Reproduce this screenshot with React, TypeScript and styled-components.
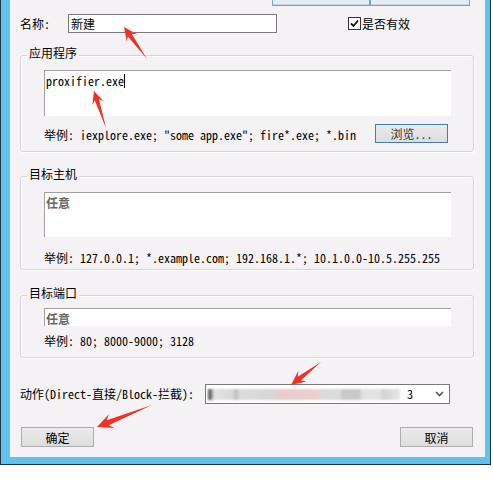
import React from "react";
import styled, { createGlobalStyle } from "styled-components";

const GlobalStyle = createGlobalStyle`
  html, body { margin: 0; padding: 0; background: #ffffff; }
  body {
    font-family: "Noto Sans Mono CJK SC", "Noto Sans CJK SC", "Liberation Mono", monospace;
    font-size: 12px;
    color: #000;
  }
  * { box-sizing: border-box; }
`;

const Frame = styled.div`
  position: relative;
  width: 491px;
  height: 465px;
  background: #5ec4ec;
  border: 1px solid #1f3347;
  border-top: none;
  padding: 0 5px 7px 9px;
`;

const Panel = styled.div`
  width: 475px;
  height: 457px;
  background: #f4f2f5;
  padding: 0 11px 0 10px;
  display: flex;
  flex-direction: column;
`;

const TopBar = styled.div`
  display: flex;
  justify-content: flex-end;
  padding-right: 4px;
  height: 6px;
`;

const Tab = styled.div<{ $w: number }>`
  width: ${(p) => p.$w}px;
  height: 6px;
  background: #e4edf2;
  border: 1px solid #7fa0c6;
  border-top: none;
  box-shadow: inset 0 -1px 0 #c4d6ea;
`;

const NameRow = styled.div`
  display: flex;
  align-items: center;
  margin-top: 8px;
  height: 19px;
`;

const Label = styled.span<{ $w?: number }>`
  width: ${(p) => (p.$w ? `${p.$w}px` : "auto")};
  flex-shrink: 0;
  line-height: 14px;
  white-space: pre;
`;

const TextBox = styled.div`
  width: 209px;
  height: 19px;
  background: #fff;
  border: 1px solid #7a7a7a;
  padding-left: 2px;
  line-height: 17px;
`;

const Check = styled.label`
  display: flex;
  align-items: center;
  margin-left: 71px;
  line-height: 14px;
`;

const CheckBox = styled.span`
  width: 13px;
  height: 13px;
  border: 1px solid #333;
  background: #fff;
  display: flex;
  align-items: center;
  justify-content: center;
  margin-right: 1px;
`;

const Group = styled.div<{ $mt: number; $pt: number; $pb: number }>`
  position: relative;
  margin-top: ${(p) => p.$mt}px;
  border: 1px solid #d6d4d7;
  border-radius: 3px;
  box-shadow: inset 1px 1px 0 #ffffff, 1px 1px 0 #ffffff;
  padding: ${(p) => p.$pt}px 22px ${(p) => p.$pb}px 23px;
`;

const Legend = styled.span`
  position: absolute;
  top: -10px;
  left: 6px;
  padding: 0 2px;
  background: #f4f2f5;
  line-height: 14px;
`;

const Area = styled.div<{ $h: number }>`
  height: ${(p) => p.$h}px;
  background: #fff;
  border-top: 1px solid #a0a0a0;
  border-left: 1px solid #a0a0a0;
  padding: 3px 1px;
  line-height: 14px;
  white-space: pre;
`;

const Placeholder = styled.span`
  color: #666666;
  font-weight: 700;
`;

const Caret = styled.span`
  display: inline-block;
  width: 1px;
  height: 14px;
  background: #000;
  vertical-align: top;
`;

const ExampleRow = styled.div<{ $mt: number }>`
  display: flex;
  justify-content: space-between;
  align-items: flex-end;
  margin-top: ${(p) => p.$mt}px;
`;

const Example = styled.span`
  line-height: 16px;
  white-space: pre;
`;

const Button = styled.div<{ $focus?: boolean }>`
  width: 73px;
  height: ${(p) => (p.$focus ? 19 : 20)}px;
  border: 1px solid ${(p) => (p.$focus ? "#3c7fb1" : "#adadad")};
  background: linear-gradient(#ebebeb, #dddddd);
  display: flex;
  align-items: center;
  justify-content: center;
  color: ${(p) => (p.$focus ? "#333" : "#000")};
  margin-right: ${(p) => (p.$focus ? 3 : 0)}px;
`;

const ActionRow = styled.div`
  display: flex;
  align-items: center;
  margin-top: 26px;
  height: 20px;
`;

const Select = styled.div`
  width: 245px;
  height: 20px;
  background: #fff;
  border: 1px solid #7a7a7a;
  display: flex;
  align-items: center;
  padding: 0 5px 0 2px;
`;

const Masked = styled.div`
  width: 192px;
  height: 11px;
  filter: blur(1.2px);
  background: linear-gradient(
    90deg,
    #555 0px,
    #777 3px,
    #e2e2e2 6px,
    #d8d8d8 25px,
    #bdbdbd 28px,
    #dcdcdc 32px,
    #d6d6d6 65px,
    #e9cccc 72px,
    #eccfcf 110px,
    #dadada 114px,
    #dadada 132px,
    #c9c9c9 134px,
    #c9c9c9 152px,
    #e2e2e2 154px,
    #e2e2e2 172px,
    #d2d2d2 174px,
    #e6e6e6 192px
  );
`;

const SelectValue = styled.span`
  margin-left: 7px;
  flex: 1;
  line-height: 14px;
`;

const ButtonRow = styled.div`
  display: flex;
  justify-content: space-between;
  margin: 23px 1px 0 1px;
`;

const Overlay = styled.svg`
  position: absolute;
  left: 0;
  top: 0;
  pointer-events: none;
`;

function arrowPoints(tx: number, ty: number, hx: number, hy: number, s: number) {
  const dx = hx - tx;
  const dy = hy - ty;
  const len = Math.hypot(dx, dy);
  const ux = dx / len;
  const uy = dy / len;
  const px = -uy;
  const py = ux;
  const headLen = 15 * s;
  const headW = 7 * s;
  const neckW = 2.6 * s;
  const bx = hx - ux * headLen;
  const by = hy - uy * headLen;
  const nx = bx + ux * 4 * s;
  const ny = by + uy * 4 * s;
  const pts = [
    [tx, ty],
    [nx + px * neckW, ny + py * neckW],
    [bx + px * headW, by + py * headW],
    [hx, hy],
    [bx - px * headW, by - py * headW],
    [nx - px * neckW, ny - py * neckW],
  ];
  return pts.map((p) => `${p[0].toFixed(1)},${p[1].toFixed(1)}`).join(" ");
}

const arrows = [
  { t: [147, 59], h: [124, 27], s: 0.9 },
  { t: [106, 128], h: [94, 91], s: 0.85 },
  { t: [321, 362], h: [291, 385], s: 0.95 },
  { t: [152, 405], h: [97, 427], s: 1.05 },
];

export default function App() {
  return (
    <>
      <GlobalStyle />
      <Frame>
        <Panel>
          <TopBar>
            <Tab $w={98} />
            <Tab $w={100} />
          </TopBar>

          <NameRow>
            <Label $w={48}>名称:</Label>
            <TextBox>新建</TextBox>
            <Check>
              <CheckBox>
                <svg width="9" height="9" viewBox="0 0 9 9">
                  <path d="M1 4.5 L3.5 7 L8 1.5" fill="none" stroke="#111" strokeWidth="1.8" />
                </svg>
              </CheckBox>
              是否有效
            </Check>
          </NameRow>

          <Group $mt={22} $pt={14} $pb={8}>
            <Legend>应用程序</Legend>
            <Area $h={46}>
              proxifier.exe<Caret />
            </Area>
            <ExampleRow $mt={8}>
              <Example>举例: iexplore.exe; "some app.exe"; fire*.exe; *.bin</Example>
              <Button $focus>浏览...</Button>
            </ExampleRow>
          </Group>

          <Group $mt={24} $pt={15} $pb={3}>
            <Legend>目标主机</Legend>
            <Area $h={45}>
              <Placeholder>任意</Placeholder>
            </Area>
            <ExampleRow $mt={13}>
              <Example>举例: 127.0.0.1; *.example.com; 192.168.1.*; 10.1.0.0-10.5.255.255</Example>
            </ExampleRow>
          </Group>

          <Group $mt={25} $pt={12} $pb={8}>
            <Legend>目标端口</Legend>
            <Area $h={18}>
              <Placeholder>任意</Placeholder>
            </Area>
            <ExampleRow $mt={7}>
              <Example>举例: 80; 8000-9000; 3128</Example>
            </ExampleRow>
          </Group>

          <ActionRow>
            <Label $w={185}>动作(Direct-直接/Block-拦截):</Label>
            <Select>
              <Masked />
              <SelectValue>3</SelectValue>
              <svg width="9" height="6" viewBox="0 0 9 6">
                <path d="M1 1 L4.5 4.5 L8 1" fill="none" stroke="#555" strokeWidth="1.6" />
              </svg>
            </Select>
          </ActionRow>

          <ButtonRow>
            <Button>确定</Button>
            <Button>取消</Button>
          </ButtonRow>
        </Panel>
      </Frame>

      <Overlay width="493" height="496" viewBox="0 0 493 496">
        {arrows.map((a, i) => (
          <polygon
            key={i}
            points={arrowPoints(a.t[0], a.t[1], a.h[0], a.h[1], a.s)}
            fill="#ef3226"
          />
        ))}
      </Overlay>
    </>
  );
}
